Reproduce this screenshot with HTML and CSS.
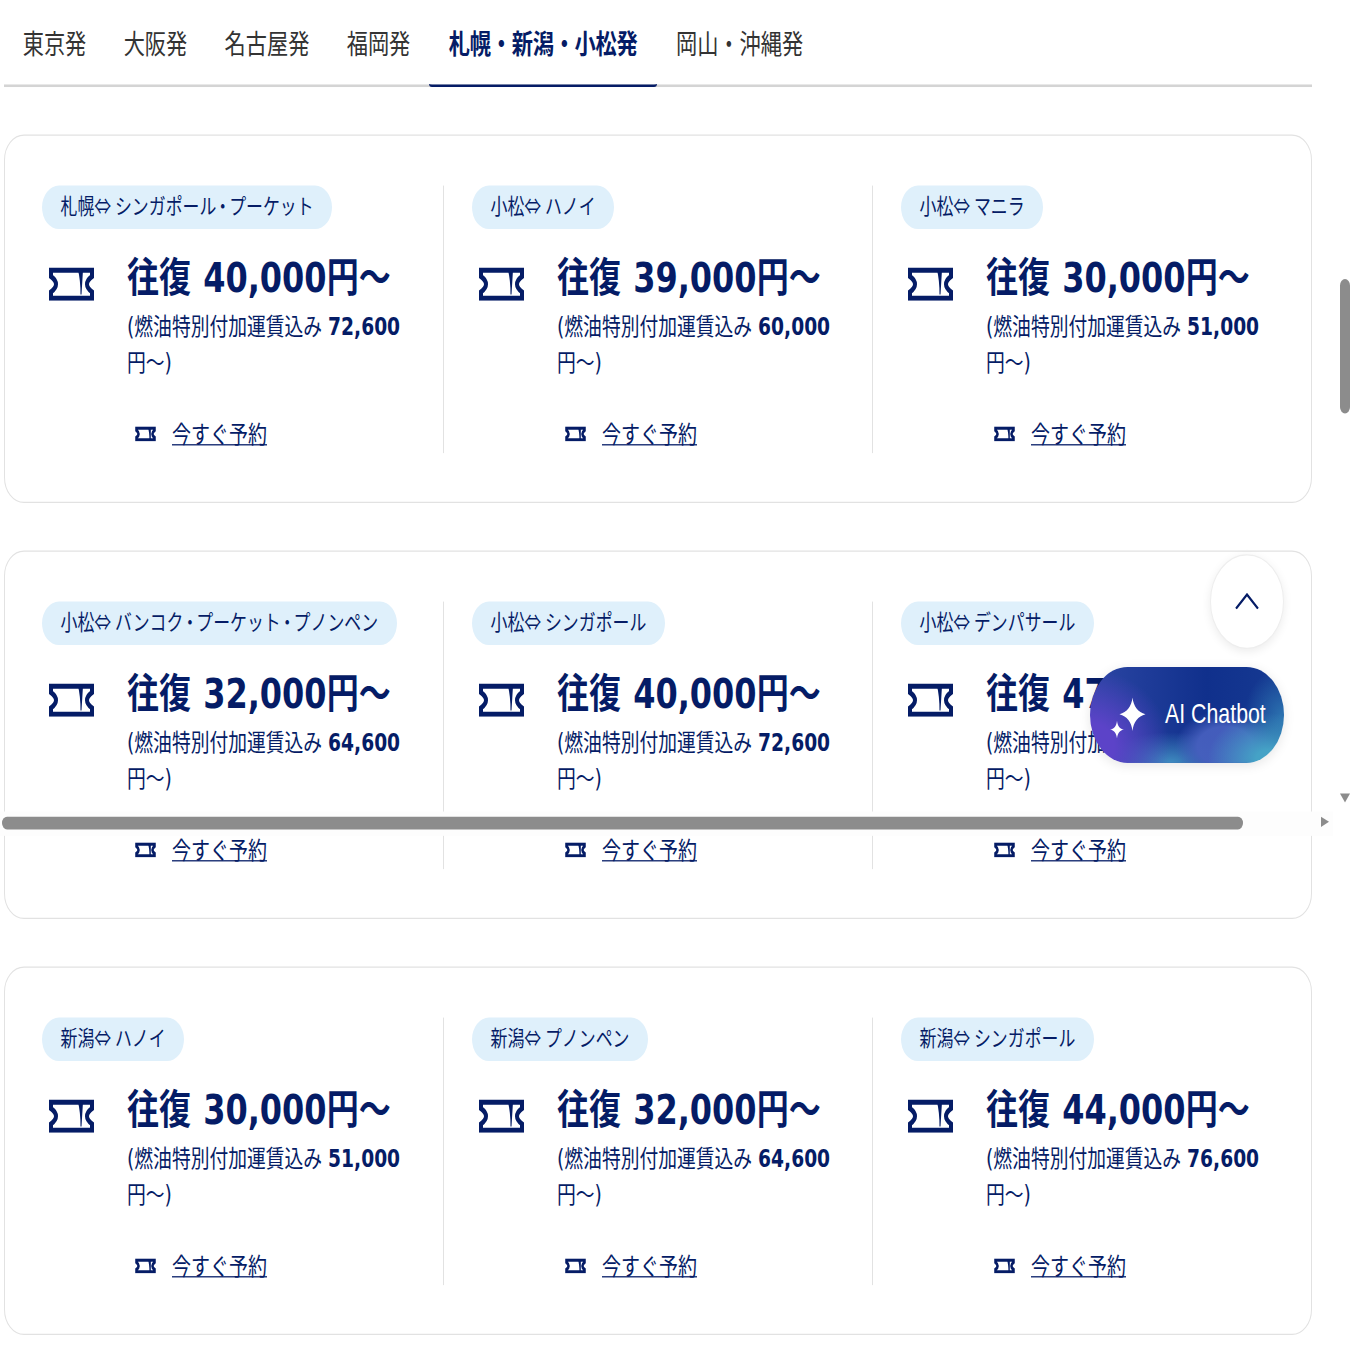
FILE: index.html
```html
<!DOCTYPE html>
<html lang="ja">
<head>
    <meta charset="UTF-8">
    <meta name="viewport" content="width=device-width, initial-scale=1.0">
    <title>航空券セール</title>
    <link rel="stylesheet" href="styles.css">
</head>
<body>
    <svg class="icon-defs" aria-hidden="true">
        <symbol id="ticket" viewBox="0 0 45 26">
            <path d="M2 2H43V7Q33 13 43 19V24H2V19Q12 13 2 7Z" fill="none" stroke="currentColor" stroke-width="4"/>
            <path d="M29 2H34L32.5 21H31.5Q31.5 10 29 2Z" fill="currentColor"/>
        </symbol>
        <symbol id="ticket-bold" viewBox="0 0 45 26">
            <path d="M3 3H42V7Q33 13 42 19V23H3V19Q12 13 3 7Z" fill="none" stroke="currentColor" stroke-width="5.5"/>
            <path d="M28 3H34V23H31Q31 10 28 3Z" fill="currentColor"/>
        </symbol>
    </svg>
    <div class="page">
        <nav class="tabs">
            <a class="tab">東京発</a>
            <a class="tab">大阪発</a>
            <a class="tab">名古屋発</a>
            <a class="tab">福岡発</a>
            <a class="tab active">札幌・新潟・小松発</a>
            <a class="tab">岡山・沖縄発</a>
        </nav>

        <section class="card">
            <div class="fare">
                <span class="route">札幌⇔ シンガポール<span class="dot">・</span>プーケット</span>
                <div class="price-row">
                    <svg class="ticket-large"><use href="#ticket"/></svg>
                    <div class="price-text">
                        <p class="price">往復 40,000円～</p>
                        <p class="note">(燃油特別付加運賃込み <b>72,600</b>円～)</p>
                    </div>
                </div>
                <a class="book"><svg class="ticket-small"><use href="#ticket-bold"/></svg><span>今すぐ予約</span></a>
            </div>
            <div class="fare">
                <span class="route">小松⇔ ハノイ</span>
                <div class="price-row">
                    <svg class="ticket-large"><use href="#ticket"/></svg>
                    <div class="price-text">
                        <p class="price">往復 39,000円～</p>
                        <p class="note">(燃油特別付加運賃込み <b>60,000</b>円～)</p>
                    </div>
                </div>
                <a class="book"><svg class="ticket-small"><use href="#ticket-bold"/></svg><span>今すぐ予約</span></a>
            </div>
            <div class="fare">
                <span class="route">小松⇔ マニラ</span>
                <div class="price-row">
                    <svg class="ticket-large"><use href="#ticket"/></svg>
                    <div class="price-text">
                        <p class="price">往復 30,000円～</p>
                        <p class="note">(燃油特別付加運賃込み <b>51,000</b>円～)</p>
                    </div>
                </div>
                <a class="book"><svg class="ticket-small"><use href="#ticket-bold"/></svg><span>今すぐ予約</span></a>
            </div>
        </section>

        <section class="card">
            <div class="fare">
                <span class="route">小松⇔ バンコク<span class="dot">・</span>プーケット<span class="dot">・</span>プノンペン</span>
                <div class="price-row">
                    <svg class="ticket-large"><use href="#ticket"/></svg>
                    <div class="price-text">
                        <p class="price">往復 32,000円～</p>
                        <p class="note">(燃油特別付加運賃込み <b>64,600</b>円～)</p>
                    </div>
                </div>
                <a class="book"><svg class="ticket-small"><use href="#ticket-bold"/></svg><span>今すぐ予約</span></a>
            </div>
            <div class="fare">
                <span class="route">小松⇔ シンガポール</span>
                <div class="price-row">
                    <svg class="ticket-large"><use href="#ticket"/></svg>
                    <div class="price-text">
                        <p class="price">往復 40,000円～</p>
                        <p class="note">(燃油特別付加運賃込み <b>72,600</b>円～)</p>
                    </div>
                </div>
                <a class="book"><svg class="ticket-small"><use href="#ticket-bold"/></svg><span>今すぐ予約</span></a>
            </div>
            <div class="fare">
                <span class="route">小松⇔ デンパサール</span>
                <div class="price-row">
                    <svg class="ticket-large"><use href="#ticket"/></svg>
                    <div class="price-text">
                        <p class="price">往復 47,000円～</p>
                        <p class="note">(燃油特別付加運賃込み <b>79,600</b>円～)</p>
                    </div>
                </div>
                <a class="book"><svg class="ticket-small"><use href="#ticket-bold"/></svg><span>今すぐ予約</span></a>
            </div>
        </section>

        <section class="card">
            <div class="fare">
                <span class="route">新潟⇔ ハノイ</span>
                <div class="price-row">
                    <svg class="ticket-large"><use href="#ticket"/></svg>
                    <div class="price-text">
                        <p class="price">往復 30,000円～</p>
                        <p class="note">(燃油特別付加運賃込み <b>51,000</b>円～)</p>
                    </div>
                </div>
                <a class="book"><svg class="ticket-small"><use href="#ticket-bold"/></svg><span>今すぐ予約</span></a>
            </div>
            <div class="fare">
                <span class="route">新潟⇔ プノンペン</span>
                <div class="price-row">
                    <svg class="ticket-large"><use href="#ticket"/></svg>
                    <div class="price-text">
                        <p class="price">往復 32,000円～</p>
                        <p class="note">(燃油特別付加運賃込み <b>64,600</b>円～)</p>
                    </div>
                </div>
                <a class="book"><svg class="ticket-small"><use href="#ticket-bold"/></svg><span>今すぐ予約</span></a>
            </div>
            <div class="fare">
                <span class="route">新潟⇔ シンガポール</span>
                <div class="price-row">
                    <svg class="ticket-large"><use href="#ticket"/></svg>
                    <div class="price-text">
                        <p class="price">往復 44,000円～</p>
                        <p class="note">(燃油特別付加運賃込み <b>76,600</b>円～)</p>
                    </div>
                </div>
                <a class="book"><svg class="ticket-small"><use href="#ticket-bold"/></svg><span>今すぐ予約</span></a>
            </div>
        </section>

        <!-- floating buttons -->
        <button class="to-top" aria-label="ページ上部へ">
            <svg width="24" height="13" viewBox="0 0 24 13"><path d="M1 12.5L12 1.5L23 12.5" fill="none" stroke="currentColor" stroke-width="2"/></svg>
        </button>
        <button class="chatbot">
            <svg width="40" height="32" viewBox="0 0 40 32">
                <path d="M22.5 0C23.5 7 28 11.5 35.5 13C28 14.5 23.5 19 22.5 26C21.5 19 17 14.5 9.5 13C17 11.5 21.5 7 22.5 0Z" fill="#fff"/>
                <path d="M7 18C7.5 22 10 24.5 14 25C10 25.5 7.5 28 7 32C6.5 28 4 25.5 0 25C4 24.5 6.5 22 7 18Z" fill="#fff"/>
            </svg>
            <span>AI Chatbot</span>
        </button>

        <!-- scrollbars captured in the shot -->
        <div class="hbar"><div class="hbar-thumb"></div><div class="hbar-arrow"></div></div>
        <div class="vbar-thumb"></div>
        <div class="vbar-arrow"></div>
    </div>
</body>
</html>
```
FILE: styles.css
```css
* {
    margin: 0;
    padding: 0;
    box-sizing: border-box;
}

html, body {
    width: 1360px;
    height: 1360px;
    overflow: hidden;
    background: #ffffff;
}

.icon-defs {
    display: none;
}

/* the capture is stretched vertically, every height below is before the stretch */
.page {
    position: relative;
    width: 1360px;
    height: 1062.5px;
    padding-left: 4px;
    transform: scaleY(1.28);
    transform-origin: 0 0;
    font-family: "DejaVu Sans", "Noto Sans CJK JP", sans-serif;
    color: #051c66;
}

.tabs {
    display: flex;
    width: 1308px;
    height: 68px;
    border-bottom: 2.4px solid #d4d4d4;
    margin-bottom: 37px;
}

.tab {
    height: 68px;
    padding: 19px 18.7px 0;
    font-size: 21.2px;
    line-height: 32px;
    color: #333333;
}

.tab.active {
    padding: 19px 19.7px 0;
    font-weight: bold;
    letter-spacing: -0.2px;
    color: #051c66;
    border-bottom: 2.4px solid #051c66;
    border-radius: 0 0 3px 3px;
}

.card {
    display: grid;
    grid-template-columns: 402px 429px 1fr;
    width: 1308px;
    height: 287.5px;
    margin-bottom: 37.5px;
    padding: 38.5px 0 38px 37px;
    border: 1px solid #e2e2e2;
    border-radius: 20px;
}

.fare {
    display: flex;
    flex-direction: column;
    align-items: flex-start;
    border-right: 1px solid #e2e2e2;
}

.fare + .fare {
    padding-left: 28px;
}

.fare:last-child {
    border-right: none;
}

.route {
    height: 34px;
    padding: 0 18.5px;
    border-radius: 18px;
    background: #dff0fb;
    font-family: "Noto Sans CJK JP", sans-serif;
    font-size: 16.9px;
    line-height: 29.5px;
    white-space: nowrap;
}

.route .dot {
    margin: 0 -2px;
}

.price-row {
    display: flex;
    margin-top: 17px;
}

.ticket-large {
    width: 45px;
    height: 26px;
    margin: 13px 33px 0 7px;
    flex-shrink: 0;
}

.price-text {
    width: 282px;
}

.price {
    font-size: 32px;
    line-height: 43px;
    font-weight: bold;
    word-spacing: 1px;
    white-space: nowrap;
}

.note {
    margin-top: 3px;
    font-size: 18.8px;
    line-height: 28.5px;
}

.note b {
    font-size: 18.67px;
}

.book {
    display: flex;
    align-items: center;
    height: 28px;
    margin: 26px 0 0 92px;
    font-size: 19px;
    line-height: 28px;
}

.book span {
    text-decoration: underline;
}

.ticket-small {
    width: 23px;
    height: 12px;
    margin-right: 15px;
}

.to-top {
    position: absolute;
    left: 1210px;
    top: 432.5px;
    width: 74px;
    height: 74px;
    display: flex;
    align-items: center;
    justify-content: center;
    border: 1px solid #eeeeee;
    border-radius: 50%;
    background: #ffffff;
    color: #051c66;
    box-shadow: 0 2px 8px rgba(0, 0, 0, 0.08);
}

.chatbot {
    position: absolute;
    left: 1090px;
    top: 521px;
    width: 194px;
    height: 75px;
    display: flex;
    align-items: center;
    gap: 15px;
    padding-left: 20px;
    border: none;
    border-radius: 37.5px;
    background:
        radial-gradient(ellipse 60px 36px at 178px 72px, #45a2c6 20%, transparent 100%),
        radial-gradient(ellipse 50px 28px at 135px 62px, rgba(70, 95, 190, 0.95) 55%, transparent 100%),
        radial-gradient(ellipse 80px 60px at 0px 62px, #5c43c8 30%, transparent 100%),
        radial-gradient(ellipse 70px 24px at 80px 75px, #3f8cc0 0%, transparent 100%),
        radial-gradient(ellipse 40px 40px at 194px 40px, #2a6fae 10%, transparent 100%),
        linear-gradient(90deg, #2c46a4 0%, #10308c 60%, #163a92 100%);
    box-shadow: 0 2px 10px rgba(0, 0, 0, 0.1);
    color: #ffffff;
    font-family: "Liberation Sans", sans-serif;
    font-size: 21.33px;
}

.chatbot svg {
    margin-top: 5px;
}

.hbar {
    position: absolute;
    left: 0;
    top: 633.5px;
    width: 1333px;
    height: 19px;
    background: #fdfdfd;
}

.hbar-thumb {
    position: absolute;
    left: 2px;
    top: 4px;
    width: 1241px;
    height: 10px;
    border-radius: 6px;
    background: #8c8c8c;
}

.hbar-arrow {
    position: absolute;
    left: 1321px;
    top: 4px;
    border-left: 8px solid #8c8c8c;
    border-top: 4.5px solid transparent;
    border-bottom: 4.5px solid transparent;
}

.vbar-thumb {
    position: absolute;
    left: 1340px;
    top: 218px;
    width: 10px;
    height: 105px;
    border-radius: 5px;
    background: #8c8c8c;
}

.vbar-arrow {
    position: absolute;
    left: 1340px;
    top: 619.5px;
    border-top: 7px solid #8c8c8c;
    border-left: 5px solid transparent;
    border-right: 5px solid transparent;
}
```
